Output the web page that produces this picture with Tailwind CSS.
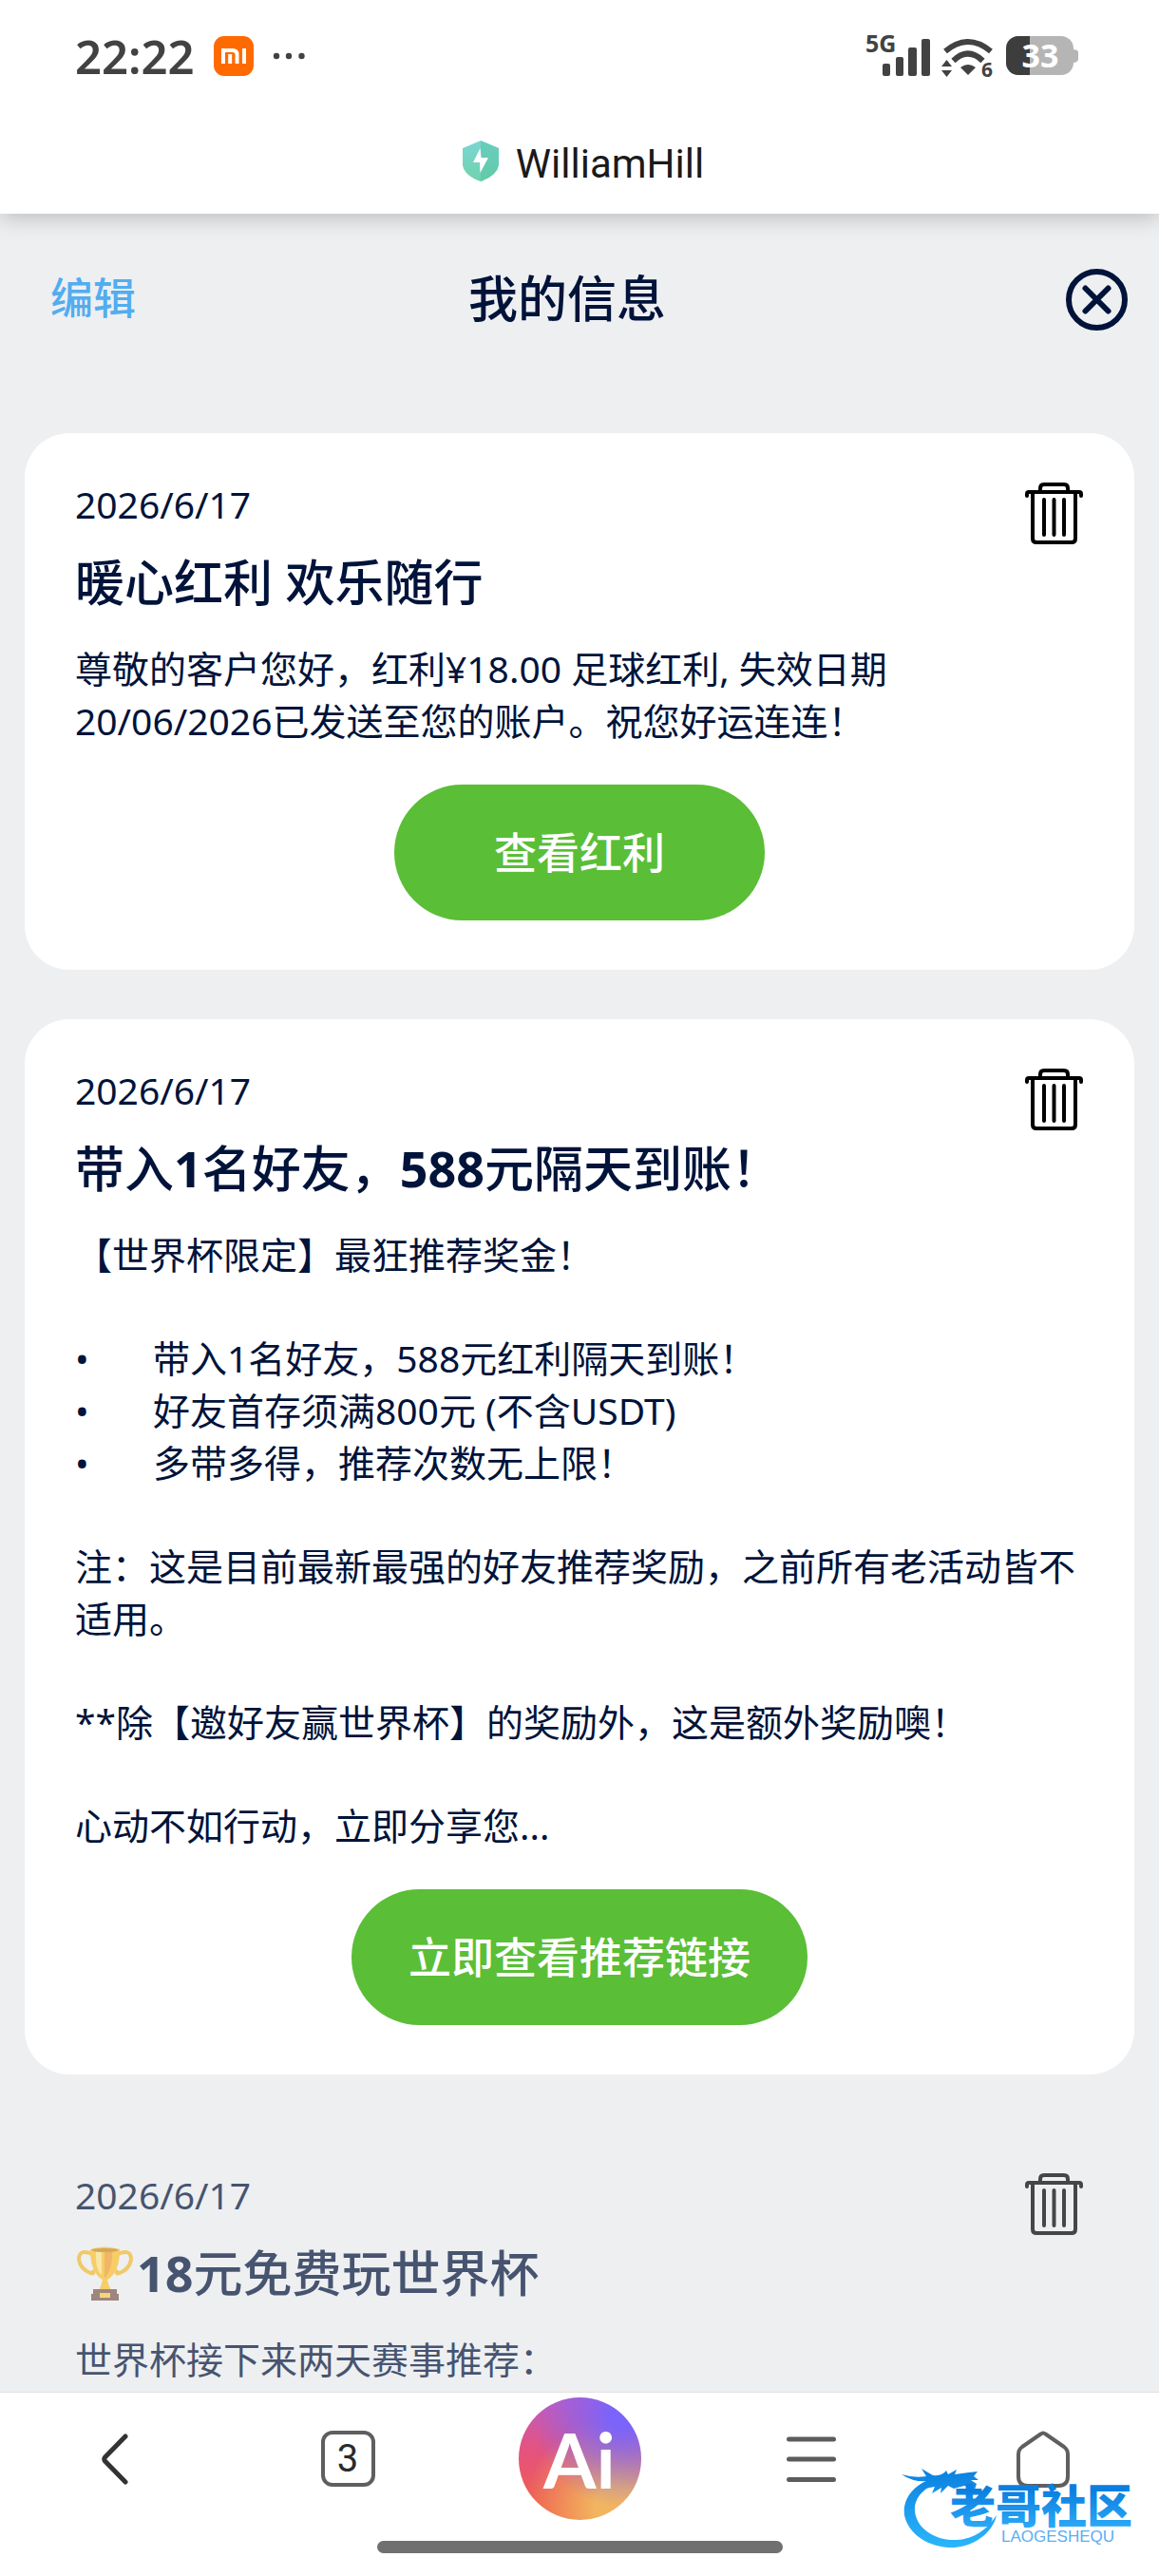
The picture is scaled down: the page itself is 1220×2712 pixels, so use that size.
<!DOCTYPE html>
<html lang="zh-CN">
<head>
  <meta charset="UTF-8">
  <meta name="viewport" content="width=device-width, initial-scale=1.0">
  <title>WilliamHill - 我的信息</title>
  <script src="https://cdn.jsdelivr.net/npm/@tailwindcss/browser@4"></script>
</head>
<body class="bg-[#eeeff1] text-[#00133a] font-['Noto_Sans','Noto_Sans_CJK_SC',sans-serif]">

  <!-- Shared icons -->
  <svg class="hidden" aria-hidden="true">
    <symbol id="trash" viewBox="0 0 61 65">
      <g fill="none" stroke="currentColor" stroke-width="4" stroke-linecap="round" stroke-linejoin="round">
        <path d="M2 14V12Q2 10 4 10H57Q59 10 59 12V14"/>
        <path d="M16 9V6Q16 2 20 2H41Q45 2 45 6V9"/>
        <path d="M8 11V59Q8 63 12 63H49Q53 63 53 59V11"/>
        <path d="M20 18V55M30.500 18V55M41 18V55"/>
      </g>
    </symbol>
  </svg>

  <div class="h-screen flex flex-col">
    <!-- Status bar + browser title -->
    <header class="relative z-10 bg-white shadow-[0_4px_22px_rgba(0,0,0,0.22)]">
      <div class="h-[118px] pl-[79px] pr-[85px] flex items-center justify-between">
        <div class="flex items-center text-[#424242]">
          <span class="text-[49px] leading-[60px] font-semibold">22:22</span>
          <svg class="ml-5 w-[42px] h-[42px]" viewBox="0 0 42 42" aria-label="Mi">
            <rect width="42" height="42" rx="11" fill="#ff6a00"/>
            <g fill="none" stroke="#fff" stroke-width="4">
              <path d="M10 29V15H20Q24.500 15 24.500 19.500V29"/>
              <path d="M17.200 19V29M32 13V29"/>
            </g>
          </svg>
          <svg class="ml-5 w-[34px] h-2" viewBox="0 0 34 8" fill="#424242" aria-hidden="true">
            <circle cx="4" cy="4" r="3.200"/><circle cx="17" cy="4" r="3.200"/><circle cx="30.500" cy="4" r="3.200"/>
          </svg>
        </div>
        <div class="flex items-center">
          <svg class="w-[68px] h-[66px] font-bold" viewBox="0 -10 68 66" fill="#424242" aria-label="5G">
            <text x="0" y="19" font-size="25">5G</text>
            <rect x="18" y="31" width="8" height="13" rx="2"/>
            <rect x="32" y="24" width="8" height="20" rx="2"/>
            <rect x="45" y="14" width="9" height="30" rx="2"/>
            <rect x="59" y="5" width="9" height="39" rx="2"/>
          </svg>
          <svg class="ml-3 w-[56px] h-[66px] font-bold" viewBox="0 -10 56 66" aria-label="Wi-Fi 6">
            <g fill="none" stroke="#424242" stroke-width="6">
              <path d="M4 18Q28 -2 52 18"/>
              <path d="M12.500 28Q28 13 43.500 28"/>
            </g>
            <path d="M20 35Q28 29 36 35L28 43Z" fill="#424242"/>
            <path d="M0 34L5.500 27L11 34ZM0 38H11L5.500 45Z" fill="#424242"/>
            <text x="42" y="45" font-size="21" fill="#424242">6</text>
          </svg>
          <svg class="ml-3 w-[76px] h-[62px] font-bold" viewBox="0 -10 76 62" aria-label="33%">
            <clipPath id="fill"><rect width="25" height="42"/></clipPath>
            <path d="M70 14Q76 14 76 17V24Q76 28 70 28Z" fill="#b5b5b5"/>
            <rect width="71" height="41" rx="13" fill="#b5b5b5"/>
            <rect width="71" height="41" rx="13" fill="#3d3d3d" clip-path="url(#fill)"/>
            <text x="36" y="33" font-size="34" text-anchor="middle" fill="#fff">33</text>
          </svg>
        </div>
      </div>
      <div class="h-[107px] pt-[30px] pl-2 flex justify-center items-start gap-[18px]">
        <svg class="w-[38px] h-[43px]" viewBox="0 0 38 43" aria-hidden="true">
          <defs>
            <linearGradient id="shield" x1="0" y1="0" x2="0" y2="1">
              <stop offset="0" stop-color="#7ad6d4"/><stop offset="1" stop-color="#6fd3ac"/>
            </linearGradient>
          </defs>
          <path d="M19 0L38 8V26Q36 37 19 43Q2 37 0 26V8Z" fill="url(#shield)"/>
          <path d="M19 0L38 8V26Q36 37 19 43Z" fill="#4fbf9f" opacity=".4"/>
          <path d="M18.500 8L11 23H18L18.500 34L27 18H19.500Z" fill="#fff"/>
        </svg>
        <span class="font-['Roboto',sans-serif] text-[42px] leading-[50px] text-[#1a1a1a]">WilliamHill</span>
      </div>
    </header>

    <main class="flex-1 min-h-0 overflow-hidden pt-[57px]">
      <div class="h-16 pl-[53px] pr-[79px] grid grid-cols-[1fr_auto_1fr] items-center">
        <button class="justify-self-start text-[45px] leading-[64px] pb-[3px] font-medium text-[#52adf0]">编辑</button>
        <h1 class="text-[52px] leading-[64px] pb-[3px] font-medium">我的信息</h1>
        <button class="justify-self-end -mr-[46px]" aria-label="关闭">
          <svg class="w-[65px] h-[65px]" viewBox="0 0 65 65" fill="none" stroke="#00133a" stroke-linecap="round">
            <circle cx="32.500" cy="32.500" r="29.500" stroke-width="6"/>
            <path d="M20.500 20.500L44.500 44.500M44.500 20.500L20.500 44.500" stroke-width="6"/>
          </svg>
        </button>
      </div>

      <div class="mt-[110px] px-[26px] flex flex-col gap-[52px]">
        <!-- Message 1 -->
        <article class="relative bg-white rounded-[47px] px-[53px] pt-[47px] pb-[52px]">
          <button class="absolute top-[52px] right-[54px] text-black" aria-label="删除"><svg class="w-[61px] h-[65px]"><use href="#trash"/></svg></button>
          <p class="text-[39px] leading-[55px]">2026/6/17</p>
          <h2 class="mt-[17px] text-[52px] leading-[76px] font-medium">暖心红利 欢乐随行</h2>
          <p class="mt-[25px] text-[39px] leading-[55px]">尊敬的客户您好，红利¥18.00 足球红利, 失效日期<br>20/06/2026已发送至您的账户。祝您好运连连！</p>
          <div class="mt-10 flex justify-center">
            <button class="h-[143px] min-w-[390px] px-[58px] rounded-full bg-[#5abe37] text-white text-[45px] font-medium">查看红利</button>
          </div>
        </article>

        <!-- Message 2 -->
        <article class="relative bg-white rounded-[47px] px-[53px] pt-[47px] pb-[52px]">
          <button class="absolute top-[52px] right-[54px] text-black" aria-label="删除"><svg class="w-[61px] h-[65px]"><use href="#trash"/></svg></button>
          <p class="text-[39px] leading-[55px]">2026/6/17</p>
          <h2 class="mt-[17px] text-[52px] leading-[76px] font-medium">带入<b>1</b>名好友，<b>588</b>元隔天到账！</h2>
          <div class="mt-[25px] flex flex-col gap-[54px] text-[39px] leading-[55px]">
            <p>【世界杯限定】最狂推荐奖金！</p>
            <ul>
              <li class="flex"><span class="w-[82px]">•</span>带入1名好友，588元红利隔天到账！</li>
              <li class="flex"><span class="w-[82px]">•</span>好友首存须满800元 (不含USDT)</li>
              <li class="flex"><span class="w-[82px]">•</span>多带多得，推荐次数无上限！</li>
            </ul>
            <p>注：这是目前最新最强的好友推荐奖励，之前所有老活动皆不适用。</p>
            <p>**除【邀好友赢世界杯】的奖励外，这是额外奖励噢！</p>
            <p>心动不如行动，立即分享您...</p>
          </div>
          <div class="mt-10 flex justify-center">
            <button class="h-[143px] min-w-[390px] px-[60px] rounded-full bg-[#5abe37] text-white text-[45px] font-medium">立即查看推荐链接</button>
          </div>
        </article>

        <!-- Message 3 (read) -->
        <article class="relative rounded-[47px] px-[53px] pt-[47px] pb-[52px] opacity-70">
          <button class="absolute top-[52px] right-[54px] text-black" aria-label="删除"><svg class="w-[61px] h-[65px]"><use href="#trash"/></svg></button>
          <p class="text-[39px] leading-[55px]">2026/6/17</p>
          <h2 class="mt-[17px] flex items-center text-[52px] leading-[76px] font-medium">
            <svg class="w-[65px] h-[57px]" viewBox="0 0 65 57" aria-label="奖杯">
              <g fill="none" stroke="#f2b92f" stroke-width="4">
                <path d="M18 8Q4 2 4 14Q6 24 16 28Q21 30 18 25"/>
                <path d="M45 8Q59 2 59 14Q57 24 47 28Q42 30 45 25"/>
              </g>
              <path d="M16 3Q31 -2 47 3Q47 28 34 35Q35 41 38 46H25Q28 41 29 35Q16 28 16 3Z" fill="#fbc02d"/>
              <path d="M31 4H39Q40 24 31 34Z" fill="#f29d2c"/>
              <path d="M22 5H28V30Q21 24 22 5Z" fill="#fde58a"/>
              <ellipse cx="31.500" cy="4" rx="14" ry="2" fill="#c98a1b"/>
              <path d="M19 45H44V50H46V57H17V50H19Z" fill="#7d5a4d"/>
              <rect x="26" y="49" width="11" height="5" fill="#ffc84a"/>
            </svg><b>18</b>元免费玩世界杯
          </h2>
          <p class="mt-[25px] text-[39px] leading-[55px]">世界杯接下来两天赛事推荐：</p>
        </article>
      </div>
    </main>

    <!-- Browser toolbar -->
    <nav class="relative z-10 bg-white border-t border-[#e2e2e2] pt-[5px] pb-6">
      <div class="grid grid-cols-5 items-center justify-items-center">
        <button aria-label="返回">
          <svg class="w-[32px] h-[56px]" viewBox="0 0 32 56" fill="none" stroke="#333" stroke-width="5" stroke-linecap="round" stroke-linejoin="round"><path d="M26 4L4.500 26Q3 28 4.500 30L26 52"/></svg>
        </button>
        <button class="w-[57px] h-[59px] rounded-xl border-4 border-[#5f5f5f] font-['Roboto',sans-serif] text-[40px] leading-[50px] text-[#2b2b2b]">3</button>
        <button class="w-[129px] h-[129px] rounded-full text-white font-['Lato',sans-serif] font-bold text-[80px] leading-[124px] bg-[radial-gradient(circle_at_85%_15%,#7a64fa_8%,transparent_62%),radial-gradient(circle_at_80%_90%,#f2b45f_15%,transparent_62%),linear-gradient(180deg,#c85ab8_5%,#e5537c_45%,#ef5f4c_90%)]">Ai</button>
        <button aria-label="菜单">
          <svg class="w-[52px] h-[48px]" viewBox="0 0 52 48" stroke="#5c5c5c" stroke-width="5" stroke-linecap="round"><path d="M2.500 3H49.500M2.500 24H49.500M2.500 45.500H49.500"/></svg>
        </button>
        <button aria-label="主页">
          <svg class="w-[56px] h-[60px]" viewBox="0 0 56 60" fill="none" stroke="#5f5f5f" stroke-width="4" stroke-linejoin="round"><path d="M25.500 3.500Q28 1.500 30.500 3.500L50 17Q54 20 54 25V48Q54 58 44 58H12Q2 58 2 48V25Q2 20 6 17Z"/></svg>
        </button>
      </div>
      <div class="mt-[22px] mx-auto w-[35%] h-[13px] rounded-full bg-[#707070]"></div>

      <!-- Community watermark -->
      <svg class="absolute right-[16px] bottom-[24px] w-[256px] h-[94px]" viewBox="0 0 256 94" aria-label="老哥社区">
        <defs>
          <linearGradient id="ring" gradientUnits="userSpaceOnUse" x1="0" y1="4" x2="0" y2="88">
            <stop offset="0" stop-color="#0a7fe0"/><stop offset="1" stop-color="#2bb6fb"/>
          </linearGradient>
          <linearGradient id="word" gradientUnits="userSpaceOnUse" x1="0" y1="28" x2="0" y2="66">
            <stop offset="0" stop-color="#0a7fe0"/><stop offset="1" stop-color="#2ba8f6"/>
          </linearGradient>
        </defs>
        <g fill="url(#ring)">
          <path d="M35 15C12 22 2 38 4 54C8 74 30 89 57 88C79 86 97 72 101 54C91 69 78 79 59 80C35 81 16 67 15 49C14 34 28 21 49 18Z"/>
          <path d="M1 11Q14 15 27 13L22 5L34 12Q44 13 48 7L50 11L59 6L57 11L72 9L81 8L77 13L82 17H74L80 21L78 27L67 23L56 26L50 23L42 31L43 25L33 31L36 24L25 26L31 18Q14 20 1 11Z"/>
        </g>
        <text x="52" y="62" font-size="48" font-weight="900" fill="url(#word)" font-family="Noto Sans CJK SC">老哥社区</text>
        <text x="106" y="82" font-size="17" font-family="Liberation Sans" fill="#5aaef0">LAOGESHEQU</text>
      </svg>
    </nav>
  </div>
</body>
</html>
